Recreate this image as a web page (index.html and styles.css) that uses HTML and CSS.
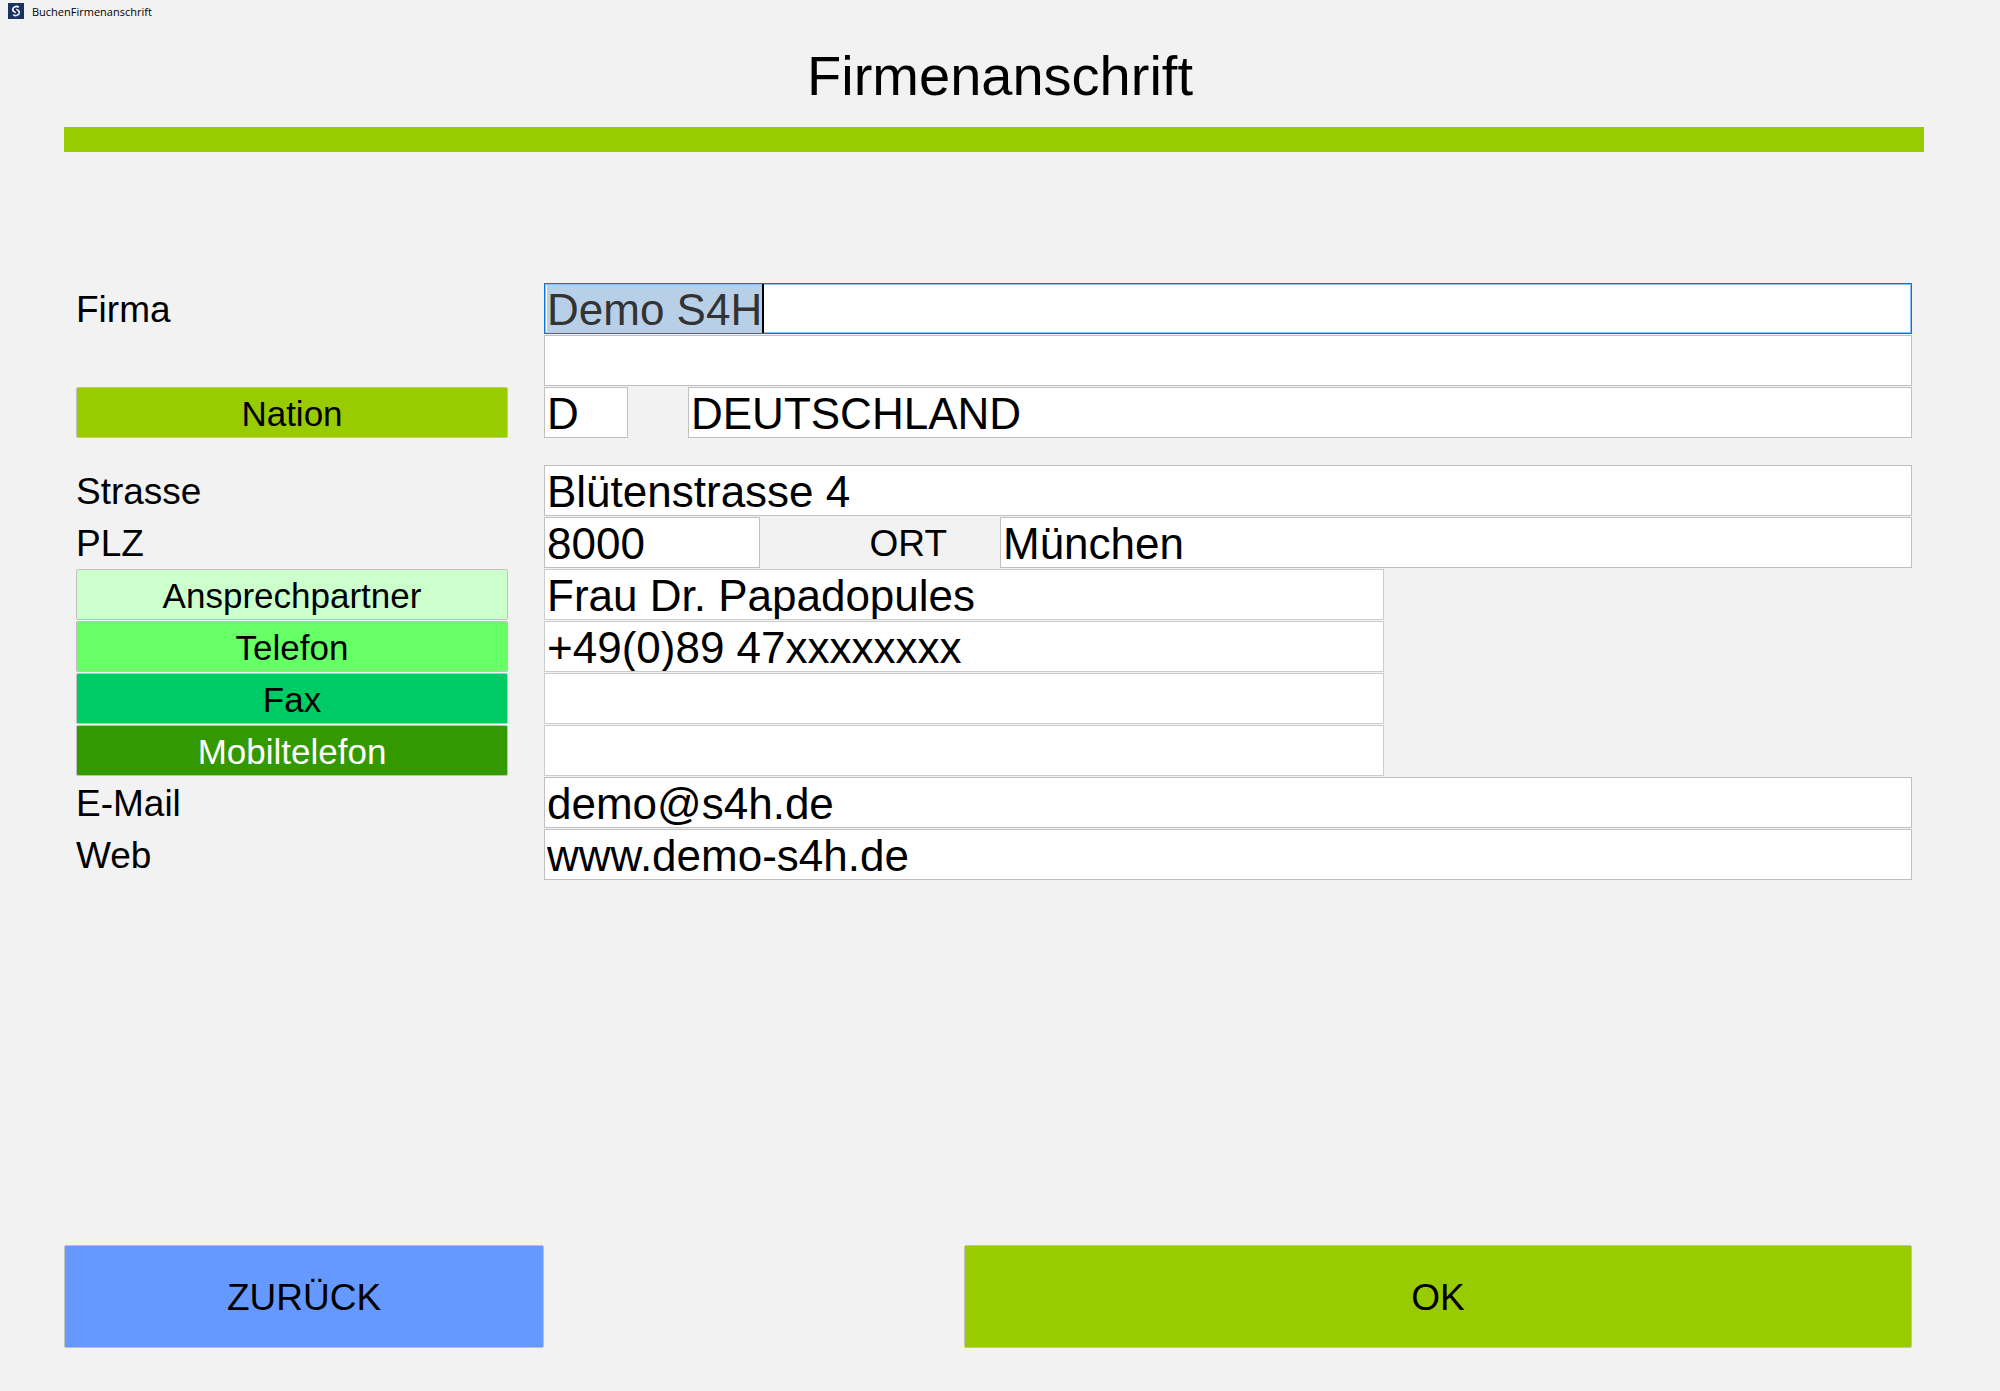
FILE: index.html
```html
<!DOCTYPE html>
<html lang="de">
	<head>
		<meta charset="UTF-8" />
		<title>BuchenFirmenanschrift</title>
		<link rel="stylesheet" href="styles.css">
	</head>
	<body>
		<header class="titlebar">
			<svg class="app-icon" width="16" height="16" viewBox="0 0 16 16">
				<rect width="16" height="16" fill="#1b3160" />
				<path d="M10.800 4.200C8.500 2.500 4.800 3.800 4.700 6.500C4.700 8.500 6.500 9 8 9.300" fill="none" stroke="#fff" stroke-width="1.700" />
				<path d="M5.200 11.800C7.500 13.500 11.300 12.200 11.300 9.500C11.300 7.500 9.500 7 8 6.700" fill="none" stroke="#dfe2e9" stroke-width="1.700" />
				<path d="M6.800 6.500L9.200 9.500" stroke="#1b3160" stroke-width="1.800" />
			</svg>
			<span>BuchenFirmenanschrift</span>
		</header>

		<h1 class="heading">Firmenanschrift</h1>
		<div class="rule"></div>

		<form class="page" onsubmit="return false">
			<div class="fields">
				<div class="row">
					<label class="label" for="firma">Firma</label>
					<div class="cell">
						<input class="input" type="text" id="firma" value="Demo S4H" />
						<div class="caret-line"><span class="caret-text">Demo S4H</span><span class="caret"></span></div>
					</div>
				</div>
				<div class="row">
					<span></span>
					<div class="cell">
						<input class="input" type="text" id="firma2" aria-label="Firma Zusatz" />
					</div>
				</div>
				<div class="row row-nation">
					<button class="btn btn-nation" type="button" id="btnNation">Nation</button>
					<div class="cell cell-nation">
						<input class="input code" type="text" id="nation" value="D" aria-labelledby="btnNation" />
						<input class="input" type="text" id="land" value="DEUTSCHLAND" aria-label="Land" />
					</div>
				</div>
				<div class="row">
					<label class="label" for="strasse">Strasse</label>
					<div class="cell">
						<input class="input" type="text" id="strasse" value="Blütenstrasse 4" />
					</div>
				</div>
				<div class="row">
					<label class="label" for="plz">PLZ</label>
					<div class="cell">
						<input class="input plz" type="text" id="plz" value="8000" />
						<label class="label label-ort" for="ort">ORT</label>
						<input class="input" type="text" id="ort" value="München" />
					</div>
				</div>
				<div class="row">
					<button class="btn btn-partner" type="button" id="btnPartner">Ansprechpartner</button>
					<div class="cell cell-short">
						<input class="input" type="text" id="partner" value="Frau Dr. Papadopules" aria-labelledby="btnPartner" />
					</div>
				</div>
				<div class="row">
					<button class="btn btn-telefon" type="button" id="btnTelefon">Telefon</button>
					<div class="cell cell-short">
						<input class="input" type="text" id="telefon" value="+49(0)89 47xxxxxxxx" aria-labelledby="btnTelefon" />
					</div>
				</div>
				<div class="row">
					<button class="btn btn-fax" type="button" id="btnFax">Fax</button>
					<div class="cell cell-short">
						<input class="input" type="text" id="fax" aria-labelledby="btnFax" />
					</div>
				</div>
				<div class="row">
					<button class="btn btn-mobil" type="button" id="btnMobil">Mobiltelefon</button>
					<div class="cell cell-short">
						<input class="input" type="text" id="mobil" aria-labelledby="btnMobil" />
					</div>
				</div>
				<div class="row">
					<label class="label" for="email">E-Mail</label>
					<div class="cell">
						<input class="input" type="text" id="email" value="demo@s4h.de" />
					</div>
				</div>
				<div class="row">
					<label class="label" for="web">Web</label>
					<div class="cell">
						<input class="input" type="text" id="web" value="www.demo-s4h.de" />
					</div>
				</div>
			</div>

			<div class="actions">
				<button class="btn btn-big btn-back" type="button">ZURÜCK</button>
				<button class="btn btn-big btn-ok" type="submit">OK</button>
			</div>
		</form>

		<script>
			const firma = document.getElementById('firma')
			firma.focus()
			firma.select()
		</script>
	</body>
</html>
```

FILE: styles.css
```css
* {
	box-sizing: border-box;
}
body {
	margin: 0;
	min-height: 100vh;
	display: flex;
	flex-direction: column;
	background: #f2f2f2;
	color: #000;
	font-family: "Liberation Sans", Arial, sans-serif;
}
.titlebar {
	display: flex;
	align-items: center;
	gap: 8px;
	height: 22px;
	padding: 0 8px;
	font-family: "Open Sans", "Segoe UI", sans-serif;
	font-size: 11px;
}
.heading {
	margin: 22px 0 19px;
	font-size: 56px;
	font-weight: normal;
	line-height: 64px;
	text-align: center;
}
.rule {
	height: 25px;
	margin: 0 76px 0 64px;
	background: #99cc00;
}
.page {
	flex: 1;
	display: flex;
	flex-direction: column;
	justify-content: space-between;
	padding: 131px 88px 43px 64px;
}
.fields {
	display: flex;
	flex-direction: column;
	gap: 1px;
	padding-left: 12px;
}
.row {
	display: grid;
	grid-template-columns: 432px 1fr;
	column-gap: 36px;
	height: 51px;
}
.row-nation {
	margin-bottom: 26px;
}
.label {
	align-self: center;
	padding-top: 2px;
	font-size: 37px;
}
.cell {
	position: relative;
	display: flex;
}
.cell-nation {
	gap: 60px;
}
/* person and phone fields stop before the right edge */
.cell-short {
	display: grid;
	grid-template-columns: 35fr 22fr;
}
.input {
	flex: 1;
	min-width: 0;
	height: 51px;
	padding: 2px 2px 0;
	border: 1px solid #c0c0c0;
	border-radius: 0;
	background: #fff;
	color: #000;
	font-family: inherit;
	font-size: 44px;
}
.cell-short .input {
	border-color: #cdcdcd;
}
.input:focus {
	outline: none;
	border-color: #0b74e5;
	box-shadow: inset 0 0 0 1px #8cc0f5;
	caret-color: transparent;
}
.input::selection {
	background: #b8d0e7;
	color: #333;
}
.code {
	flex: 0 0 84px;
}
.plz {
	flex: 0 0 216px;
}
.label-ort {
	flex: 0 0 240px;
	padding-right: 53px;
	text-align: right;
}
/* text cursor at the end of the selected name */
.caret-line {
	display: none;
	position: absolute;
	top: 1px;
	left: 3px;
	height: 49px;
	font-size: 44px;
	pointer-events: none;
}
.input:focus + .caret-line {
	display: flex;
}
.caret-text {
	visibility: hidden;
}
.caret {
	width: 2px;
	background: #000;
}
.btn {
	padding: 2px 0 0;
	border: 1px solid #c0c0c0;
	border-radius: 2px;
	color: #000;
	font-family: inherit;
	font-size: 35px;
}
.btn-nation,
.btn-ok {
	background: #99cc00;
}
.btn-partner {
	background: #ccffcc;
}
.btn-telefon {
	background: #66ff66;
}
.btn-fax {
	background: #00cc66;
}
.btn-mobil {
	background: #339900;
	color: #fff;
}
.actions {
	display: grid;
	grid-template-columns: 480px 1fr;
	column-gap: 420px;
}
.btn-big {
	height: 103px;
	font-size: 37px;
}
.btn-back {
	background: #6699ff;
}
```
